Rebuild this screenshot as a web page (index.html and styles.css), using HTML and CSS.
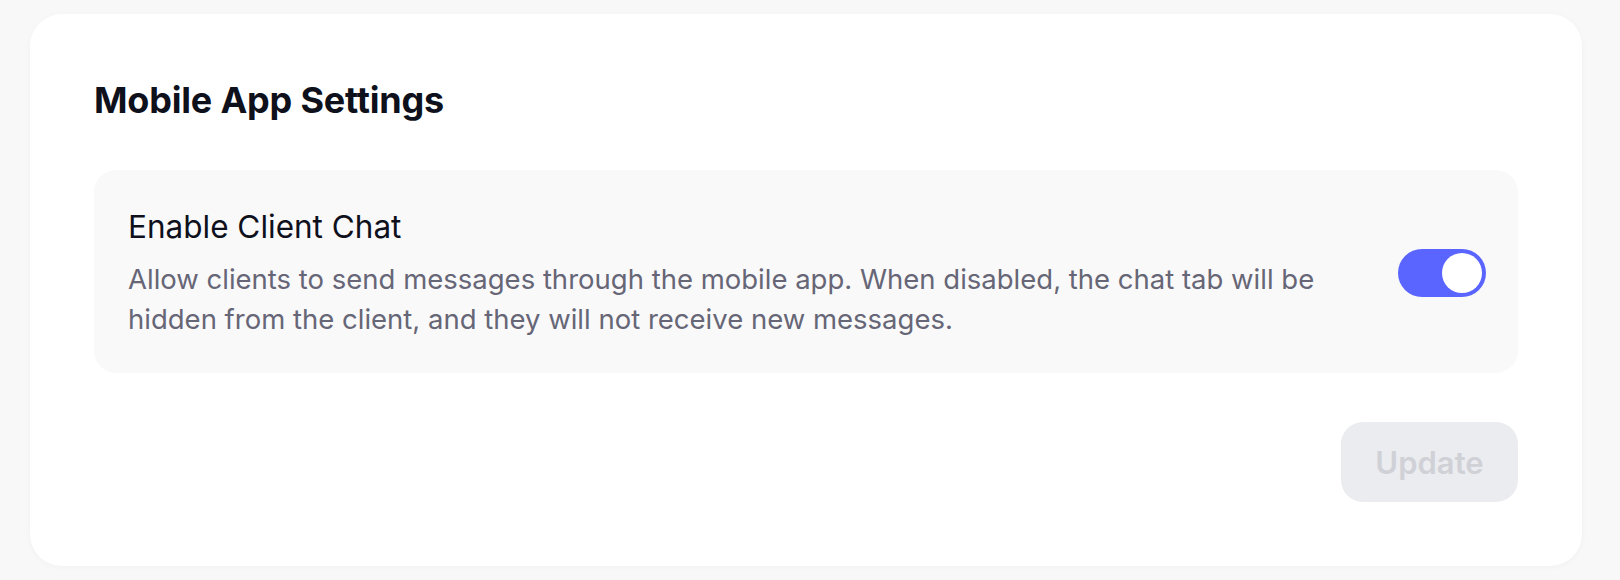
FILE: index.html
```html
<!DOCTYPE html>
<html lang="en">
<head>
<meta charset="utf-8">
<title>Mobile App Settings</title>
<link rel="stylesheet" href="styles.css">
</head>
<body>
  <main class="page">
    <section class="card">
      <h1 class="card-title">Mobile App Settings</h1>
      <div class="setting">
        <div class="setting-text">
          <div class="setting-label">Enable Client Chat</div>
          <p class="setting-desc">Allow clients to send messages through the mobile app. When disabled, the chat tab will be hidden from the client, and they will not receive new messages.</p>
        </div>
        <button class="toggle" type="button" aria-pressed="true"><span class="knob"></span></button>
      </div>
      <div class="actions">
        <button class="btn-update" type="button" disabled>Update</button>
      </div>
    </section>
  </main>
</body>
</html>
```

FILE: styles.css
```css
* { box-sizing: border-box; }
html, body { margin: 0; padding: 0; }
body {
  background: #f8f8f8;
  font-family: Inter, "Noto Sans", "Liberation Sans", sans-serif;
  width: 1620px;
  height: 580px;
  overflow: hidden;
}
.page {
  padding: 14px 38px 14px 30px;
}
.card {
  background: #ffffff;
  border-radius: 32px;
  box-shadow: 0 1px 6px rgba(0, 0, 0, 0.03);
  padding: 64px;
  width: 1552px;
  height: 552px;
  display: flex;
  flex-direction: column;
}
.card-title {
  margin: 0 0 48px 0;
  font-size: 36px;
  line-height: 44px;
  font-weight: 700;
  color: #0e101b;
  letter-spacing: -0.2px;
}
.setting {
  background: #f9f9fa;
  border-radius: 22px;
  padding: 36px 32px 33px 34px;
  display: flex;
  align-items: center;
  gap: 48px;
  height: 203px;
}
.setting-text {
  flex: 1;
  min-width: 0;
}
.setting-label {
  font-size: 31.5px;
  line-height: 40px;
  font-weight: 400;
  color: #0e101b;
  margin-bottom: 12px;
}
.setting-desc {
  margin: 0;
  font-size: 27.5px;
  line-height: 40px;
  color: #666676;
}
.toggle {
  flex: none;
  width: 88px;
  height: 48px;
  border-radius: 24px;
  background: #5a64fe;
  border: none;
  padding: 4px;
  display: flex;
  justify-content: flex-end;
  align-items: center;
}
.knob {
  width: 40px;
  height: 40px;
  border-radius: 50%;
  background: #ffffff;
}
.actions {
  display: flex;
  justify-content: flex-end;
  margin-top: 49px;
}
.btn-update {
  height: 80px;
  padding: 0 32px;
  width: 177px;
  border: none;
  border-radius: 22px;
  background: #ebecf0;
  color: #d0d1d6;
  font-family: Inter, "Noto Sans", "Liberation Sans", sans-serif;
  font-size: 31px;
  font-weight: 600;
}
```
